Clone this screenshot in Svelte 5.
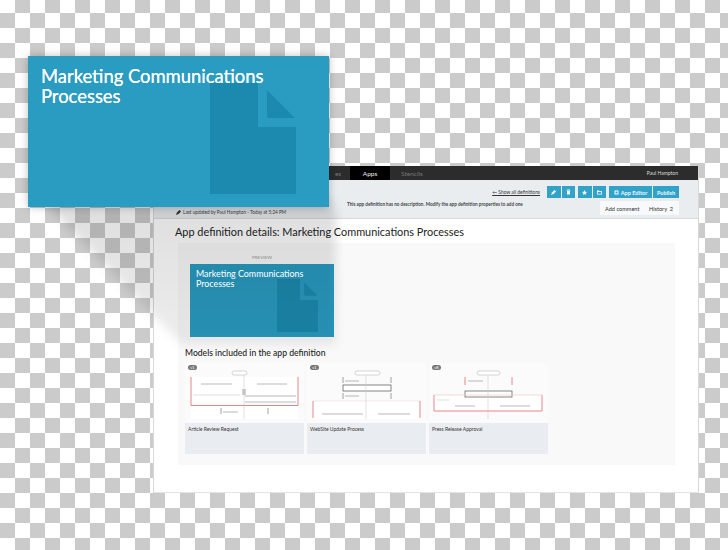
<script>
	const grey = '#8b8b8b', dark = '#666', red = '#e4888a', pale = '#cfcfcf';

	const models = [
		{
			title: 'Article Review Request',
			version: 'v1',
			pill: [47, 8, 15, 4],
			sheet: [6, 14, 107, 42],
			lines: [
				[59, 12, 59, 56, pale],
				[6, 14, 6, 42.5, red], [6, 42.5, 113, 42.5, red], [113, 14, 113, 42.5, red],
				[16, 21, 47, 21, grey], [72, 21, 102, 21, grey],
				[8, 32, 55, 32, pale], [60, 33, 111, 33, grey], [60, 39, 111, 39, grey],
				[58, 26, 58, 32, dark], [60, 26, 60, 32, dark],
				[36, 45, 36, 51, dark], [83, 45, 83, 51, dark], [38, 49, 53, 49, grey]
			],
			boxes: []
		},
		{
			title: 'WebSite Update Process',
			version: 'v1',
			pill: [48, 8, 25, 4],
			sheet: [6, 38, 107, 18],
			lines: [
				[59, 12, 59, 56, pale],
				[36, 14, 36, 20, dark], [84, 14, 84, 20, dark], [38, 18, 52, 18, grey],
				[36, 30, 36, 36, dark], [84, 30, 84, 36, dark], [38, 33, 52, 33, grey],
				[6, 38, 113, 38, '#f2d7d7'], [6, 38, 6, 55, red], [113, 38, 113, 55, red],
				[15, 51, 56, 51, grey], [71, 51, 103, 51, grey]
			],
			boxes: [[36, 22, 48, 6]]
		},
		{
			title: 'Press Release Approval',
			version: 'v8',
			pill: [48, 8, 23, 4],
			sheet: [5, 32, 108, 16],
			lines: [
				[59, 12, 59, 56, pale],
				[36, 14, 36, 22, red], [83, 14, 83, 22, red], [39, 18, 54, 18, grey],
				[5, 32, 113, 32, '#efc4c4'], [5, 32, 5, 48, red], [5, 48, 113, 48, red], [113, 32, 113, 48, red],
				[26, 43, 46, 43, grey], [71, 43, 101, 43, grey], [8, 37, 20, 37, pale]
			],
			boxes: [[36, 28, 47, 6]]
		}
	];
</script>

<div class="stage">
	<div class="window">
		<header class="topbar">
			<nav class="tabs">
				<span class="tab dim cut">es</span>
				<span class="tab active">Apps</span>
				<span class="tab dim stencils">Stencils</span>
			</nav>
			<span class="user">Paul Hampton</span>
		</header>

		<section class="subbar">
			<div class="updated">
				<svg width="5" height="5" viewBox="0 0 10 10"><path d="M0 10 L2 5 L7 0 L10 3 L5 8 Z" fill="#333" /></svg>
				<span>Last updated by Paul Hampton - Today at 5:24 PM</span>
			</div>
			<p class="desc">This app definition has no description. Modify the app definition properties to add one</p>
			<div class="side">
				<div class="actions">
					<a class="back" href="#top">← Show all definitions</a>
					<div class="group">
						<span class="btn icon">
							<svg width="5" height="5" viewBox="0 0 10 10"><path d="M0 10 L2 5 L7 0 L10 3 L5 8 Z" fill="#fff" /></svg>
						</span>
						<span class="btn icon">
							<svg width="5" height="6" viewBox="0 0 10 10"><path d="M2 0 H8 V1 H9 V2 H1 V1 H2 Z M2 3 H8 V10 H2 Z" fill="#fff" /></svg>
						</span>
					</div>
					<div class="group">
						<span class="btn icon">
							<svg width="5" height="5" viewBox="0 0 10 10"><path d="M5 0 L6.5 3.5 L10 4 L7.4 6.4 L8 10 L5 8.2 L2 10 L2.6 6.4 L0 4 L3.5 3.5 Z" fill="#fff" /></svg>
						</span>
						<span class="btn icon">
							<svg width="5" height="5" viewBox="0 0 10 10"><path d="M0 1 H4 L5 2.5 H10 V9 H0 Z M1.5 4 V7.5 H8.5 V4 Z" fill="#fff" fill-rule="evenodd" /></svg>
						</span>
					</div>
					<div class="group">
						<span class="btn editor">
							<svg width="5" height="5" viewBox="0 0 10 10"><path d="M1 1 H9 V9 H1 Z M3 3 V7 H7 V3 Z" fill="#fff" fill-rule="evenodd" /></svg>
							App Editor
						</span>
						<span class="btn publish">Publish</span>
					</div>
				</div>
				<div class="social">
					<span>Add comment</span>
					<span>History&nbsp; 2</span>
				</div>
			</div>
		</section>

		<main class="body">
			<h1>App definition details: Marketing Communications Processes</h1>
			<div class="panel">
				<div class="preview-label">PREVIEW</div>
				<div class="preview">
					<div class="preview-title">Marketing Communications Processes</div>
					<svg class="doc" viewBox="0 0 86 111"><path d="M0 0 H48 V44 H86 V111 H0 Z M57 7 L85 35 H57 Z" fill="#1c8aae" /></svg>
				</div>
				<h2>Models included in the app definition</h2>
				<div class="models">
					{#each models as m}
						<article class="model">
							<div class="thumb">
								<span class="badge">{m.version}</span>
								<svg class="diagram" viewBox="0 0 119 60" width="119" height="60">
									<rect x={m.sheet[0]} y={m.sheet[1]} width={m.sheet[2]} height={m.sheet[3]} fill="#fff" />
									<rect x={m.pill[0]} y={m.pill[1]} width={m.pill[2]} height={m.pill[3]} rx="2" fill="#fff" stroke="#aaa" stroke-width=".5" />
									{#each m.boxes as b}
										<rect x={b[0]} y={b[1]} width={b[2]} height={b[3]} fill="#fff" stroke="#666" stroke-width=".8" />
									{/each}
									{#each m.lines as l}
										<line x1={l[0]} y1={l[1]} x2={l[2]} y2={l[3]} stroke={l[4]} stroke-width={l[4] === red ? 1 : 0.6} />
									{/each}
								</svg>
							</div>
							<div class="caption">{m.title}</div>
						</article>
					{/each}
				</div>
			</div>
		</main>
	</div>

	<div class="long-shadow"><div class="long-shadow-shape"></div></div>

	<div class="card">
		<div class="card-title">Marketing Communications Processes</div>
		<svg class="doc" viewBox="0 0 86 111"><path d="M0 0 H48 V44 H86 V111 H0 Z M57 7 L85 35 H57 Z" fill="#1c8aae" /></svg>
	</div>
</div>

<style>
	:global(body) {
		margin: 0;
	}
	.stage {
		position: relative;
		width: 728px;
		height: 550px;
		box-sizing: border-box;
		padding: 166px 0 0 153px;
		overflow: hidden;
		background: repeating-conic-gradient(#cbcbcb 0 25%, #fff 0 50%) 0 -2px / 30px 30px;
		font-family: Lato, "Liberation Sans", sans-serif;
		color: #222;
	}
	.window {
		width: 546px;
		height: 327px;
		box-sizing: border-box;
		background: #fff;
		border-left: 1px solid #d8d8d8;
		border-right: 1px solid #d8d8d8;
		border-bottom: 1px solid #e4e4e4;
		display: flex;
		flex-direction: column;
	}
	.topbar {
		height: 14px;
		flex: none;
		background: #2c2c2c;
		display: flex;
		align-items: stretch;
		justify-content: space-between;
		padding: 0 20px 0 172px;
		font-size: 5px;
		color: #ddd;
	}
	.tabs {
		display: flex;
	}
	.tab {
		display: flex;
		align-items: center;
		justify-content: center;
		width: 40px;
		position: relative;
	}
	.cut {
		width: 24px;
	}
	.dim {
		color: #777;
		font-size: 6.5px;
	}
	.stencils {
		margin-left: 2px;
	}
	.active {
		background: #000;
		color: #eee;
		font-size: 6.5px;
	}
	.active::after {
		content: "";
		position: absolute;
		left: 17px;
		top: 100%;
		border: 3px solid transparent;
		border-top-color: #000;
		border-bottom: 0;
	}
	.user {
		align-self: center;
	}
	.subbar {
		height: 39px;
		flex: none;
		box-sizing: border-box;
		background: #e9edf0;
		border-bottom: 1px solid #d6d9dc;
		position: relative;
		display: flex;
		align-items: flex-start;
		justify-content: flex-end;
		padding: 6px 19px 0 0;
	}
	.updated {
		position: absolute;
		left: 22px;
		bottom: 3px;
		display: flex;
		align-items: center;
		gap: 2px;
		font-size: 4.7px;
		color: #444;
	}
	.desc {
		position: absolute;
		left: 193px;
		top: 21px;
		margin: 0;
		font-size: 4.6px;
		font-weight: 700;
		color: #444;
		white-space: nowrap;
	}
	.side {
		display: flex;
		flex-direction: column;
		align-items: flex-end;
		gap: 4px;
	}
	.actions {
		display: flex;
		align-items: center;
		gap: 3px;
	}
	.back {
		font-size: 4.9px;
		color: #333;
		text-decoration: underline;
		margin-right: 4px;
	}
	.group {
		display: flex;
		gap: 1px;
		height: 12px;
	}
	.btn {
		background: #33a2c9;
		color: #eef8fb;
		display: flex;
		align-items: center;
		justify-content: center;
		gap: 2px;
		font-size: 5.6px;
		font-weight: 700;
	}
	.icon {
		width: 13.5px;
	}
	.editor {
		width: 43px;
	}
	.publish {
		width: 26px;
	}
	.social {
		display: flex;
		justify-content: space-between;
		align-items: center;
		box-sizing: border-box;
		width: 79px;
		height: 14px;
		margin-top: -1px;
		padding: 0 6px 0 5px;
		background: #f8f9fa;
		font-size: 5.6px;
		color: #333;
	}
	.body {
		padding: 0 23px 0 21px;
		flex: 1;
	}
	h1 {
		margin: 6px 0 5px;
		font-size: 10.9px;
		line-height: 13px;
		font-weight: 400;
		color: #222;
	}
	.panel {
		height: 222px;
		box-sizing: border-box;
		margin-left: 3px;
		padding: 0 7px;
		background: #f9f9f9;
		display: flex;
		flex-direction: column;
	}
	.preview-label {
		width: 144px;
		margin: 11px 0 0 5px;
		height: 10px;
		text-align: center;
		font-size: 4.6px;
		line-height: 7px;
		color: #9a9a9a;
	}
	.preview {
		position: relative;
		box-sizing: border-box;
		width: 144px;
		height: 73px;
		margin-left: 5px;
		padding: 5px 6px;
		overflow: hidden;
		background: #2a9bc1;
		color: #fff;
	}
	.preview-title {
		position: relative;
		z-index: 1;
		width: 122px;
		font-size: 8.9px;
		line-height: 10px;
	}
	.preview .doc {
		position: absolute;
		left: 87px;
		top: 15px;
		width: 41px;
		height: 53px;
	}
	h2 {
		margin: 11px 0 4px;
		font-size: 8.6px;
		line-height: 11px;
		font-weight: 500;
		color: #222;
	}
	.models {
		display: flex;
		gap: 3px;
	}
	.model {
		width: 119px;
		height: 91px;
		display: flex;
		flex-direction: column;
	}
	.thumb {
		position: relative;
		height: 60px;
		background: #fbfbfb;
	}
	.diagram {
		display: block;
	}
	.badge {
		position: absolute;
		left: 3px;
		top: 2px;
		width: 9px;
		height: 5px;
		border-radius: 3px;
		background: #777;
		color: #fff;
		text-align: center;
		font-size: 4px;
		line-height: 5px;
	}
	.caption {
		flex: 1;
		box-sizing: border-box;
		padding: 3px;
		background: #e9edf2;
		font-size: 5px;
		line-height: 6px;
		color: #333;
	}
	.long-shadow {
		position: absolute;
		left: 0;
		top: 0;
		width: 400px;
		height: 400px;
		filter: blur(5px);
	}
	.long-shadow-shape {
		width: 100%;
		height: 100%;
		clip-path: polygon(42px 200px, 330px 200px, 336px 213px, 336px 345px, 182px 345px);
		background: linear-gradient(rgba(0, 0, 0, .13) 50%, rgba(0, 0, 0, .07) 86%);
	}
	.card {
		position: absolute;
		left: 28px;
		top: 56px;
		width: 301px;
		height: 151px;
		box-sizing: border-box;
		padding: 10px 13px;
		background: #2a9bc1;
		color: #fff;
		box-shadow: 0 0 8px rgba(0, 0, 0, .25);
	}
	.card-title {
		position: relative;
		z-index: 1;
		width: 240px;
		font-size: 18.4px;
		line-height: 20px;
		text-shadow: 0 0 .6px #fff;
	}
	.card .doc {
		position: absolute;
		left: 182px;
		top: 27px;
		width: 86px;
		height: 111px;
	}
</style>
